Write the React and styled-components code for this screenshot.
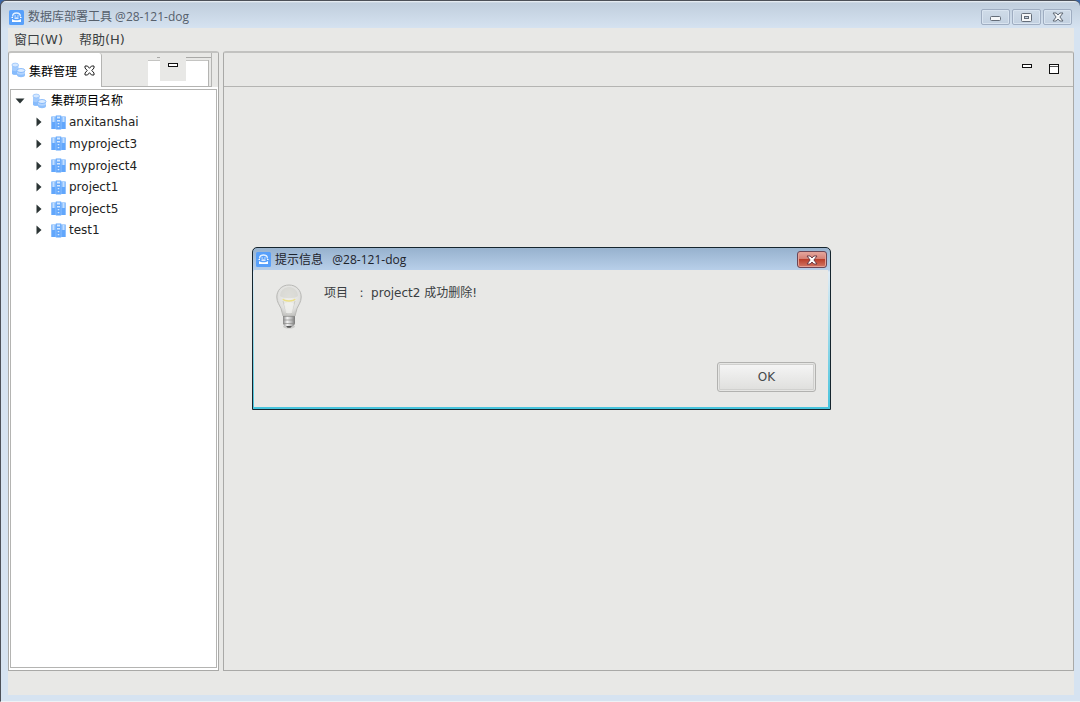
import React from 'react'
import styled, { createGlobalStyle } from 'styled-components';

const projects = ['anxitanshai', 'myproject3', 'myproject4', 'project1', 'project5', 'test1'];

function AppLogo() {
    return (
        <svg width="15" height="15" viewBox="0 0 15 15" aria-hidden="true">
            <rect width="15" height="15" rx="1.5" fill="#58a0fa"/>
            <path d="M3.600 6.500C3.600 4 5.200 3 7.500 3s3.900 1 3.900 3.500" fill="none" stroke="#e4f1ff" strokeWidth="1.300"/>
            <path d="M2.500 7.500h1.500M11 7.500h1.500M5.500 6h1.300M8.300 6h1.300M5.500 8.200h4" fill="none" stroke="#fff" strokeWidth="1.200"/>
            <path d="M3 9v3h9V9c-1 .8-2.600 1.300-4.500 1.300S4 9.800 3 9z" fill="#fff"/>
        </svg>
    )
}

function ClusterIcon() {
    return (
        <svg width="15" height="16" viewBox="0 0 15 16" aria-hidden="true">
            <path d="M1 3v8.500c0 1.800 6.500 1.800 6.500 0V3z" fill="#a3cbfd"/>
            <path d="M1 8v3.500c0 1.800 6.500 1.800 6.500 0V8c0 1.500-6.500 1.500-6.500 0z" fill="#86bbfc"/>
            <ellipse cx="4.200" cy="3" rx="3.300" ry="1.900" fill="#d5e8ff" stroke="#8dbdfb" strokeWidth=".7"/>
            <path d="M6 8.500v4.800c0 2.600 8 2.600 8 0V8.500z" fill="#8fc0fc"/>
            <path d="M6 8.500v2.500c0 2.200 8 2.200 8 0V8.500z" fill="#b4d5fe"/>
            <ellipse cx="10" cy="8.500" rx="4" ry="2" fill="#dcecff" stroke="#75aff9" strokeWidth=".8"/>
        </svg>
    )
}

function ProjectIcon() {
    return (
        <svg width="15" height="15" viewBox="0 0 15 15" aria-hidden="true">
            <path d="M.3 1.500h4.500v12.500H.3zM4.800 .5h5.400v14H4.800zM10.200 1.500h4.500v12.500h-4.500z" fill="#62a7fc"/>
            <path d="M.8 2h3.500v5H.8zM10.700 2h3.500v5h-3.500z" fill="#9ecafd"/>
            <path d="M6 1.500h3v2H6zM6 5h3v1.500H6zM6.700 8h1.600v1.300H6.700zM6.700 11h1.600v1.300H6.700z" fill="#d5e9ff"/>
            <path d="M4.900 1v13M10.100 1v13" stroke="#a0cafd" strokeWidth=".6"/>
            <path d="M2.500 2v5M12.500 2v5" stroke="#cfe5ff" strokeWidth=".8"/>
        </svg>
    )
}

function BulbIcon() {
    return (
        <svg width="28" height="48" viewBox="0 0 28 48" aria-hidden="true">
            <defs>
                <radialGradient id="glass" cx=".5" cy=".38" r=".62">
                    <stop offset="0" stopColor="#f1f1ec"/>
                    <stop offset=".7" stopColor="#e0e0de"/>
                    <stop offset="1" stopColor="#c4c4c1"/>
                </radialGradient>
                <linearGradient id="screw">
                    <stop offset="0" stopColor="#858585"/>
                    <stop offset=".35" stopColor="#f4f4f4"/>
                    <stop offset=".7" stopColor="#bbb"/>
                    <stop offset="1" stopColor="#777"/>
                </linearGradient>
            </defs>
            <ellipse cx="14" cy="43.500" rx="6" ry="2" fill="#c9c9c7"/>
            <path d="M14 2C6.500 2 1.800 7.500 1.800 14c0 5 2.700 8 4.200 11.500 1 2.500 1 5 2 7.500h12c1-2.500 1-5 2-7.500 1.500-3.500 4.200-6.500 4.200-11.500C26.200 7.500 21.500 2 14 2z" fill="url(#glass)" stroke="#b9b9b6"/>
            <path d="M5 13c0-5 4-9 9-9s9 4 9 9c-4 3-14 3-18 0z" fill="#cfcfcb" opacity=".55"/>
            <path d="M8 18l4 14M20 18l-4 14" stroke="#c6c6c2" strokeWidth=".8" fill="none"/>
            <path d="M9 21c2-2 8-2 10 0l-2 9h-6z" fill="#f2f2f0" opacity=".7"/>
            <path d="M8 16c1 2.500 11 2.500 12 0" stroke="#ecdf86" strokeWidth="1.500" fill="none"/>
            <path d="M8 33h12v8L17.500 43.500h-7L8 41z" fill="url(#screw)"/>
            <path d="M8 33.500h12M8 37h12M8 40.500h12" stroke="#8c8c89" strokeWidth=".7"/>
            <path d="M11 43h6l-1.500 1.800h-3z" fill="#555"/>
        </svg>
    )
}

function CloseGlyph({ fill = '#f5f7f9', stroke = '#5f6874' }) {
    return (
        <svg width="12" height="10" viewBox="0 0 12 10" aria-hidden="true">
            <path d="M1 1h3.200L6 3l1.800-2H11L7.900 5 11 9H7.800L6 7 4.200 9H1l3.100-4z" fill={fill} stroke={stroke}/>
        </svg>
    )
}

function MinimizeGlyph() {
    return (
        <svg width="10" height="5" viewBox="0 0 10 5" aria-hidden="true">
            <rect x=".5" y=".5" width="9" height="3" fill="#fff" stroke="#111"/>
        </svg>
    )
}

function App() {
    return (
        <WindowStyled>
            <GlobalStyle/>
            <TitleBar>
                <AppLogo/>
                <Title>数据库部署工具 @28-121-dog</Title>
                <WindowButton aria-label="Minimize">
                    <svg width="11" height="8" viewBox="0 0 11 8"><rect x=".5" y="3.500" width="10" height="4" rx="1" fill="#f5f7f9" stroke="#646d79"/></svg>
                </WindowButton>
                <WindowButton aria-label="Maximize">
                    <svg width="11" height="9" viewBox="0 0 11 9">
                        <rect x=".5" y=".5" width="10" height="8" rx="1" fill="#f5f7f9" stroke="#646d79"/>
                        <rect x="3.500" y="3.500" width="4" height="2" fill="#c4d0de" stroke="#646d79"/>
                    </svg>
                </WindowButton>
                <WindowButton aria-label="Close"><CloseGlyph/></WindowButton>
            </TitleBar>
            <Client>
                <MenuBar>
                    <MenuButton>窗口(W)</MenuButton>
                    <MenuButton>帮助(H)</MenuButton>
                </MenuBar>
                <Workbench>
                    <SidePanel>
                        <TabBar>
                            <Tab>
                                <ClusterIcon/>
                                <span>集群管理</span>
                                <IconButton aria-label="Close view">
                                    <svg width="11" height="11" viewBox="0 0 11 11">
                                        <path d="M1 1h2.500l2 2.300L7.500 1H10v2L7.800 5.500 10 8v2H7.500l-2-2.300L3.500 10H1V8l2.200-2.500L1 3z" fill="#fff" stroke="#222"/>
                                    </svg>
                                </IconButton>
                            </Tab>
                            <ViewTools>
                                <ViewToolButton aria-label="Minimize view"><MinimizeGlyph/></ViewToolButton>
                            </ViewTools>
                        </TabBar>
                        <TreeBox>
                            <Tree>
                                <TreeRow>
                                    <svg width="10" height="6" viewBox="0 0 10 6"><path d="M.5 .5h9L5 5.500z" fill="#2b3434"/></svg>
                                    <ClusterIcon/>
                                    <span>集群项目名称</span>
                                </TreeRow>
                                {projects.map((name) => (
                                    <TreeRow key={name} $child>
                                        <svg width="6" height="10" viewBox="0 0 6 10"><path d="M.5 .5v9L5.500 5z" fill="#2b3434"/></svg>
                                        <ProjectIcon/>
                                        <span>{name}</span>
                                    </TreeRow>
                                ))}
                            </Tree>
                        </TreeBox>
                    </SidePanel>
                    <EditorPanel>
                        <EditorBar>
                            <IconButton aria-label="Minimize editor"><MinimizeGlyph/></IconButton>
                            <IconButton aria-label="Maximize editor">
                                <svg width="10" height="10" viewBox="0 0 10 10">
                                    <rect x=".5" y=".5" width="9" height="9" fill="#fff" stroke="#111"/>
                                    <path d="M1 2.500h8" stroke="#555"/>
                                </svg>
                            </IconButton>
                        </EditorBar>
                    </EditorPanel>
                </Workbench>
            </Client>
            <DialogStyled role="dialog" aria-labelledby="dialog-title">
                <DialogTitle>
                    <AppLogo/>
                    <h2 id="dialog-title">提示信息   @28-121-dog</h2>
                    <RedButton aria-label="Close dialog"><CloseGlyph fill="#fff" stroke="#6b3a45"/></RedButton>
                </DialogTitle>
                <DialogBody>
                    <div className="message">
                        <BulbIcon/>
                        <p>项目   :  project2 成功删除!</p>
                    </div>
                    <OkButton>OK</OkButton>
                </DialogBody>
            </DialogStyled>
        </WindowStyled>
    )
}

const GlobalStyle = createGlobalStyle`
    *{
        box-sizing: border-box;
    }
    body{
        margin: 0;
        background: #3a66a8;
        font-family: "DejaVu Sans", "Noto Sans CJK SC", sans-serif;
        font-size: 12px;
        color: #1c1c1c;
    }
    button{
        font: inherit;
        color: inherit;
        padding: 0;
        border: 0;
        background: none;
    }
    svg{
        display: block;
        flex: none;
    }
`;

const WindowStyled = styled.div`
    position: relative;
    display: flex;
    flex-direction: column;
    min-height: 100vh;
    padding: 0 6px 6px 7px;
    border-top: 1px solid #4c5058;
    border-left: 1px solid #4c5058;
    border-bottom: 1px solid #eef2f6;
    border-radius: 6px 6px 0 0;
    background: linear-gradient(#f0f4f8 0, #c0cedd 2px, #d6e3f1 28px);
`;

const TitleBar = styled.header`
    display: flex;
    align-items: center;
    height: 27px;
    padding: 5px 2px 0 1px;
    gap: 2px;
`;

const Title = styled.h1`
    flex: 1;
    margin: 0 0 0 2px;
    font-family: "Open Sans", "Noto Sans CJK SC", sans-serif;
    font-size: 12px;
    font-weight: 400;
    line-height: 16px;
    color: #56606c;
`;

const WindowButton = styled.button`
    display: flex;
    align-items: center;
    justify-content: center;
    width: 29px;
    height: 16px;
    border: 1px solid #9fadc1;
    border-radius: 2px;
    background: linear-gradient(#cfdbe8, #c3d1e1);
    box-shadow: inset 0 0 0 1px #d9e4f0;
`;

const Client = styled.main`
    flex: 1;
    display: flex;
    flex-direction: column;
    padding-bottom: 24px;
    background: #e8e8e6;
`;

const MenuBar = styled.nav`
    display: flex;
    align-items: center;
    gap: 16px;
    height: 23px;
    padding-left: 6px;
`;

const MenuButton = styled.button`
    font-size: 13px;
    line-height: 20px;
    color: #3b3f42;
`;

const Workbench = styled.div`
    flex: 1;
    display: flex;
    gap: 4px;
`;

const Panel = styled.section`
    display: flex;
    flex-direction: column;
    border: 1px solid #a9a9a7;
    border-top: 2px solid #c2c2c0;
    border-radius: 3px 3px 0 0;
`;

const SidePanel = styled(Panel)`
    width: 211px;
    background: #fff;
`;

const EditorPanel = styled(Panel)`
    flex: 1;
`;

const TabBar = styled.div`
    display: flex;
    height: 34px;
    background: #e8e8e6;
`;

const Tab = styled.div`
    display: flex;
    align-items: center;
    gap: 3px;
    width: 93px;
    padding-left: 2px;
    border-right: 1px solid #b4b4b2;
    border-radius: 3px 3px 0 0;
    background: #fff;
    color: #000;
    button{
        margin-left: 4px;
    }
`;

const IconButton = styled.button`
    display: flex;
`;

const ViewTools = styled.div`
    flex: 1;
    display: flex;
    margin-right: 6px;
    padding: 4px 2px 0 47px;
    border-right: 1px solid #b4b4b2;
    border-bottom: 1px solid #b4b4b2;
    background:
        linear-gradient(#a9a9a7, #a9a9a7) right 0 top 4px / 54px 1px no-repeat,
        linear-gradient(#b4b4b2, #b4b4b2) right 2px top 7px / 1px 26px no-repeat,
        linear-gradient(#c4c4c2, #c4c4c2) right 2px top 7px / 61px 1px no-repeat,
        linear-gradient(#fff, #fff) right 3px top 7px / 60px 26px no-repeat;
`;

const ViewToolButton = styled.button`
    display: flex;
    justify-content: center;
    width: 26px;
    height: 24px;
    margin-left: 11px;
    padding-top: 6px;
    background: #e8e8e6;
`;

const TreeBox = styled.div`
    flex: 1;
    margin: 2px 1px;
    border: 1px solid #b4b4b2;
    background: #fff;
`;

const Tree = styled.ul`
    display: flex;
    flex-direction: column;
    height: 151px;
    margin: 0;
    padding: 0;
    list-style: none;
`;

const TreeRow = styled.li`
    flex: 1;
    display: flex;
    align-items: center;
    gap: ${(props) => (props.$child ? '9px' : '7px')};
    padding-left: ${(props) => (props.$child ? '25px' : '4px')};
    line-height: 20px;
    color: ${(props) => (props.$child ? '#222' : '#000')};
    span{
        margin-left: ${(props) => (props.$child ? '-6px' : '-3px')};
    }
`;

const EditorBar = styled.div`
    display: flex;
    align-items: flex-start;
    justify-content: flex-end;
    gap: 17px;
    height: 34px;
    padding: 11px 14px 0 0;
    border-bottom: 1px solid #b4b4b2;
`;

const DialogStyled = styled.div`
    position: absolute;
    top: 246px;
    left: 251px;
    width: 579px;
    padding: 1px 2px 2px 1px;
    border: 1px solid #16252e;
    border-radius: 5px 5px 0 0;
    background: linear-gradient(#9ab4cf 0, #b9d0ea 22px, #e0ecf6 24px, #45c3dc 100%);
`;

const DialogTitle = styled.div`
    display: flex;
    align-items: center;
    height: 21px;
    padding: 0 1px 0 2px;
    border-radius: 3px 3px 0 0;
    background: linear-gradient(#98b3cf, #b8cfe9);
    h2{
        flex: 1;
        margin: 0 0 0 4px;
        font-family: "Open Sans", "Noto Sans CJK SC", sans-serif;
        font-size: 12px;
        font-weight: 400;
        line-height: 16px;
        white-space: pre;
        color: #1d232b;
    }
`;

const RedButton = styled.button`
    display: flex;
    align-items: center;
    justify-content: center;
    width: 30px;
    height: 17px;
    border: 1px solid #6c4656;
    border-radius: 3px;
    background: linear-gradient(#e5a79f 0%, #d58175 45%, #ba3f2b 50%, #d37766 100%);
    box-shadow: inset 0 0 0 1px #e4a196;
`;

const DialogBody = styled.div`
    display: flex;
    flex-direction: column;
    justify-content: space-between;
    min-height: 137px;
    padding: 13px 12px 15px 21px;
    background: #e8e8e6;
    .message{
        display: flex;
        gap: 21px;
    }
    p{
        margin: 0;
        line-height: 20px;
        white-space: pre;
        color: #3a3e41;
    }
`;

const OkButton = styled.button`
    align-self: flex-end;
    width: 99px;
    height: 30px;
    border: 1px solid #b2b2b0;
    border-radius: 3px;
    background: linear-gradient(#f6f6f6, #dededc);
    box-shadow: inset 0 0 0 1px #e6e6e4, inset 0 0 0 2px #d0d0ce;
    color: #45494c;
`;

export default App;
